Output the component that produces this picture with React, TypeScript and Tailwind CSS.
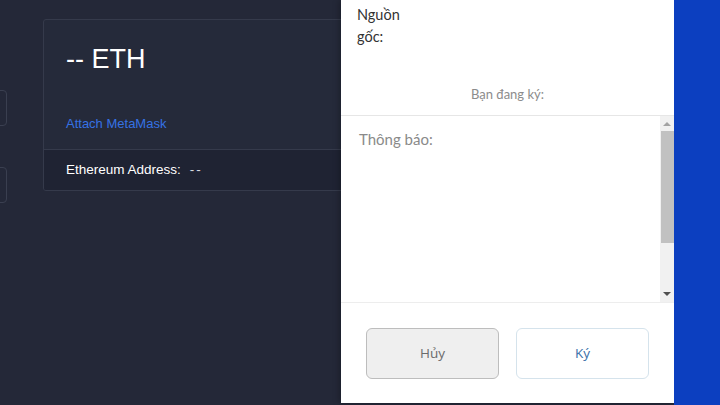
export default function App() {
  return (
    <div className="flex h-[405px] w-[720px] overflow-hidden bg-[#242838] font-['Liberation_Sans',Arial,sans-serif]">
      {/* Left — wallet page behind the popup */}
      <div className="flex w-[341px] shrink-0 overflow-hidden">
        <div className="flex w-[8px] shrink-0 flex-col">
          <div className="-ml-[24px] mt-[90px] h-[36px] w-[31px] rounded-[4px] border border-[#3a3f50]" />
          <div className="-ml-[24px] mt-[41px] h-[36px] w-[31px] rounded-[4px] border border-[#3a3f50]" />
        </div>
        <div className="ml-[35px] mt-[19px] h-[172px] w-[400px] shrink-0 overflow-hidden rounded-[3px] border border-[#353a4b] bg-[#252a3a]">
          <div className="h-[130px] border-b border-[#353a4b] pl-[22px] pt-[24px]">
            <div className="text-[27px] leading-[30px] text-white">-- ETH</div>
            <div className="mt-[40px] text-[13px] text-[#3572e4]">Attach MetaMask</div>
          </div>
          <div className="flex h-[41px] items-center bg-[#1f2333] pl-[22px] text-[13.5px] text-white">
            <span>Ethereum Address:</span>
            <span className="ml-[9px] tracking-[2px] text-[#d8dae0]">--</span>
          </div>
        </div>
      </div>

      {/* Signature popup */}
      <div className="flex h-[403px] w-[333px] shrink-0 flex-col bg-white shadow-[-2px_0_6px_rgba(0,0,0,0.25)] font-['Lato','Open_Sans',sans-serif]">
        <div className="h-[116px] border-b border-[#e6e6e6] px-[16px] pt-[4px]">
          <div className="text-[14.5px] leading-[22px] text-[#333]">
            Nguồn
            <br />
            gốc:
          </div>
          <div className="mt-[37px] text-center text-[13px] text-[#8c8c8c]">Bạn đang ký:</div>
        </div>
        <div className="flex h-[187px] border-b border-[#ededed]">
          <div className="flex-1 pl-[18px] pt-[12px] text-[15px] text-[#8a8a8a]">Thông báo:</div>
          <div className="flex w-[14px] flex-col items-center bg-[#f1f1f1]">
            <div className="mt-[6px] h-0 w-0 border-x-[4px] border-b-[4px] border-x-transparent border-b-[#a3a3a3]" />
            <div className="mt-[5px] h-[112px] w-[13px] bg-[#c1c1c1]" />
            <div className="mt-auto mb-[6px] h-0 w-0 border-x-[4px] border-t-[4px] border-x-transparent border-t-[#505050]" />
          </div>
        </div>
        <div className="flex justify-between px-[25px] pt-[25px] font-['Open_Sans',sans-serif]">
          <button className="flex h-[51px] w-[133px] items-center justify-center rounded-[6px] border border-[#bdbdbd] bg-[#efefef] text-[13.5px] text-[#6b6b6b]">
            Hủy
          </button>
          <button className="flex h-[51px] w-[133px] items-center justify-center rounded-[6px] border border-[#d5e3ec] bg-white text-[13.5px] text-[#3a70a8]">
            Ký
          </button>
        </div>
      </div>

      {/* Desktop background */}
      <div className="flex-1 bg-[#0c3fc0]" />
    </div>
  );
}
